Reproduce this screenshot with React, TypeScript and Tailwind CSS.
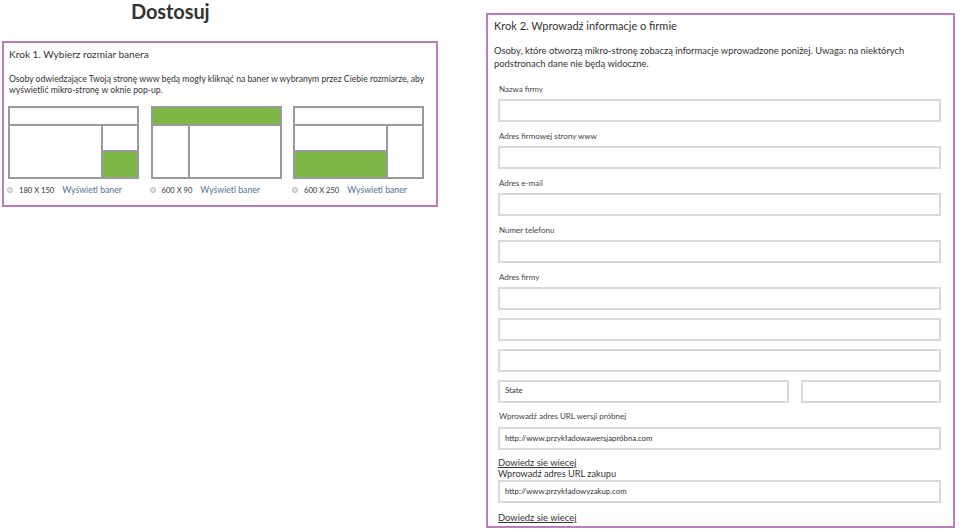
import React from "react";

const FONT = { fontFamily: "Lato, 'Noto Sans', sans-serif" };

function Box({ variant }: { variant: 1 | 2 | 3 }) {
  const G = "bg-[#7db847]";
  if (variant === 1) {
    return (
      <div className="w-[131px] h-[73px] border-2 border-[#9a9a9a] flex flex-col bg-white">
        <div className="h-[18px] border-b-2 border-[#9a9a9a]" />
        <div className="flex-1 flex">
          <div className="w-[93px] border-r-2 border-[#9a9a9a]" />
          <div className="flex-1 flex flex-col">
            <div className="flex-1 border-b-2 border-[#9a9a9a]" />
            <div className={`h-[25px] ${G}`} />
          </div>
        </div>
      </div>
    );
  }
  if (variant === 2) {
    return (
      <div className="w-[131px] h-[73px] border-2 border-[#9a9a9a] flex flex-col bg-white">
        <div className={`h-[18px] border-b-2 border-[#9a9a9a] ${G}`} />
        <div className="flex-1 flex">
          <div className="w-[37px] border-r-2 border-[#9a9a9a]" />
          <div className="flex-1" />
        </div>
      </div>
    );
  }
  return (
    <div className="w-[131px] h-[73px] border-2 border-[#9a9a9a] flex flex-col bg-white">
      <div className="h-[18px] border-b-2 border-[#9a9a9a]" />
      <div className="flex-1 flex">
        <div className="w-[93px] border-r-2 border-[#9a9a9a] flex flex-col">
          <div className="flex-1 border-b-2 border-[#9a9a9a]" />
          <div className={`h-[25px] ${G}`} />
        </div>
        <div className="flex-1" />
      </div>
    </div>
  );
}

function BannerCol({ variant, size }: { variant: 1 | 2 | 3; size: string }) {
  return (
    <div className="w-[131px] flex flex-col">
      <Box variant={variant} />
      <div className="mt-[5px] h-[12px] flex items-center whitespace-nowrap">
        <span className="w-[6px] h-[6px] rounded-full border border-[#b5b5b5] bg-[#e6e6e6] ml-[-1px] mr-[6px]" />
        <span className="text-[7.6px] leading-[12px] text-[#333]">{size}</span>
        <span className="ml-[8px] text-[8.7px] leading-[12px] text-[#4f7396]">Wyświetl baner</span>
      </div>
    </div>
  );
}

function Label({ children, mt = "mt-[8px]" }: { children: React.ReactNode; mt?: string }) {
  return (
    <div className={`${mt} mb-[4px] ml-[11px] text-[8px] leading-[12px] text-[#444] whitespace-nowrap`}>
      {children}
    </div>
  );
}

function Input({ value, className = "" }: { value?: string; className?: string }) {
  return (
    <div
      className={`h-[23px] border-2 border-[#dadada] bg-white flex items-center pl-[5px] text-[7.8px] text-[#333] whitespace-nowrap ${className}`}
    >
      {value}
    </div>
  );
}

export default function App() {
  return (
    <div className="w-[960px] h-[529px] overflow-hidden bg-white flex" style={FONT}>
      {/* Left column */}
      <div className="ml-[2px] w-[436px] flex flex-col">
        <div className="h-[41px] pl-[129px]">
          <div className="text-[20px] leading-[22px] font-bold text-[#333] tracking-[-0.1px]">Dostosuj</div>
        </div>
        <div className="h-[166px] border-2 border-[#b97cbd] pl-[5px] pt-[4px] flex flex-col">
          <div className="text-[10.1px] leading-[14px] text-[#333] whitespace-nowrap">
            Krok 1. Wybierz rozmiar banera
          </div>
          <div className="mt-[12px] text-[8.65px] leading-[11px] text-[#333] whitespace-nowrap">
            Osoby odwiedzające Twoją stronę www będą mogły kliknąć na baner w wybranym przez Ciebie rozmiarze, aby
            <br />
            wyświetlić mikro-stronę w oknie pop-up.
          </div>
          <div className="mt-[11px] ml-[-1px] flex gap-[11.5px]">
            <BannerCol variant={1} size="180 X 150" />
            <BannerCol variant={2} size="600 X 90" />
            <BannerCol variant={3} size="600 X 250" />
          </div>
        </div>
      </div>

      {/* Right column */}
      <div className="ml-[48px] mt-[13px] w-[469px] h-[515px] border-2 border-[#b97cbd] flex flex-col">
        <div className="pl-[6px] pt-[3px] text-[11px] leading-[16px] text-[#333] whitespace-nowrap">
          Krok 2. Wprowadź informacje o firmie
        </div>
        <div className="pl-[6px] mt-[10px] text-[9.38px] leading-[13px] text-[#333] whitespace-nowrap">
          Osoby, które otworzą mikro-stronę zobaczą informacje wprowadzone poniżej. Uwaga: na niektórych
          <br />
          podstronach dane nie będą widoczne.
        </div>
        <div className="ml-[10px] w-[443px] flex flex-col">
          <div className="ml-[-10px]">
            <Label mt="mt-[12.5px]">Nazwa firmy</Label>
          </div>
          <Input />
          <div className="ml-[-10px]">
            <Label>Adres firmowej strony www</Label>
          </div>
          <Input />
          <div className="ml-[-10px]">
            <Label>Adres e-mail</Label>
          </div>
          <Input />
          <div className="ml-[-10px]">
            <Label>Numer telefonu</Label>
          </div>
          <Input />
          <div className="ml-[-10px]">
            <Label>Adres firmy</Label>
          </div>
          <Input />
          <Input className="mt-[8px]" />
          <Input className="mt-[8px]" />
          <div className="mt-[8px] flex gap-[12px]">
            <Input value="State" className="w-[291px]" />
            <Input className="flex-1" />
          </div>
          <div className="ml-[-10px]">
            <div className="mt-[7.5px] mb-[5px] ml-[11px] text-[8px] leading-[12px] text-[#444] whitespace-nowrap">
              Wprowadź adres URL wersji próbnej
            </div>
          </div>
          <Input value="http://www.przykładowawersjapróbna.com" />
          <div className="mt-[7px] text-[9.4px] leading-[11px] text-[#333] underline whitespace-nowrap">
            Dowiedz sie wiecej
          </div>
          <div className="text-[9.2px] leading-[11px] text-[#333] whitespace-nowrap">Wprowadź adres URL zakupu</div>
          <Input value="http://www.przykładowyzakup.com" className="mt-[1px]" />
          <div className="mt-[9px] text-[9.4px] leading-[11px] text-[#333] underline whitespace-nowrap">
            Dowiedz sie wiecej
          </div>
        </div>
      </div>
    </div>
  );
}
